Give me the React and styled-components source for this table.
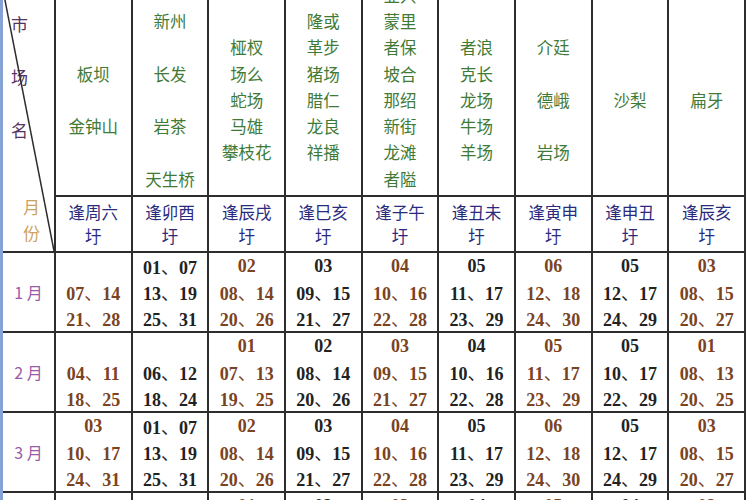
import React from "react";
import styled, { createGlobalStyle } from "styled-components";

const GlobalStyle = createGlobalStyle`
	html, body {
		margin: 0;
		padding: 0;
		background: #ffffff;
	}
`;

const Frame = styled.div`
	width: 750px;
	height: 500px;
	overflow: hidden;
	background: #ffffff;
	border-left: 3px solid #86a3d6;
	box-sizing: border-box;
`;

const Table = styled.table`
	width: 743px;
	margin-top: -10px;
	border-collapse: collapse;
	table-layout: fixed;
	font-family: "Noto Sans CJK SC", "Noto Sans", sans-serif;
`;

const Cell = styled.td`
	padding: 0;
	border: 2px solid #2d2d2d;
	text-align: center;
	vertical-align: middle;
	&:first-child {
		border-left: none;
	}
`;

const CornerCell = styled(Cell)`
	position: relative;
	vertical-align: top;
	border-top: none;
`;

const Diagonal = styled.svg`
	position: absolute;
	inset: 0;
	width: 100%;
	height: 100%;
`;

const CornerText = styled.div`
	height: 259px;
	display: flex;
	flex-direction: column;
	justify-content: space-between;
	padding: 19px 0 2px 0;
	box-sizing: border-box;
`;

const MarketLabel = styled.div`
	color: #553460;
	font-size: 17px;
	line-height: 53px;
	text-align: left;
	padding-left: 8px;
	margin-top: -12px;
`;

const MonthLabel = styled.div`
	color: #c9a45e;
	font-size: 17px;
	line-height: 26px;
	text-align: left;
	padding-left: 20px;
	margin-bottom: 1px;
`;

const HeadCell = styled(Cell)`
	border-top: none;
	vertical-align: top;
`;

const HeadStack = styled.div`
	height: 205px;
	padding-top: 16px;
	box-sizing: border-box;
`;

const HeadLines = styled.div`
	height: 188px;
	display: flex;
	flex-direction: column;
	justify-content: center;
	color: #3f7b37;
	font-size: 16.5px;
	line-height: 26.3px;
	white-space: nowrap;
`;

const Line = styled.div`
	flex: 0 0 26.3px;
`;

const DayCell = styled(Cell)`
	height: 54px;
	color: #2a2a7e;
	font-size: 16.5px;
	line-height: 24px;
`;

const MonthCell = styled(Cell)`
	height: 78px;
	color: #9a5aa6;
	font-size: 16px;
`;

const NumCell = styled(Cell)`
	height: 78px;
	color: ${(p) => (p.$brown ? "#7a4322" : "#222222")};
	font-family: "Liberation Serif", "Noto Sans CJK SC", serif;
	font-weight: bold;
	font-size: 18px;
	line-height: 26px;
	white-space: nowrap;
`;

const NumLine = styled.div`
	height: 26px;
	span {
		font-family: "Noto Sans CJK SC", sans-serif;
		font-weight: normal;
	}
`;

const markets = [
	["板坝", "", "金钟山"],
	["新州", "", "长发", "", "岩茶", "", "天生桥"],
	["桠杈", "场么", "蛇场", "马雄", "攀枝花"],
	["隆或", "革步", "猪场", "腊仁", "龙良", "祥播", ""],
	["业兴", "蒙里", "者保", "坡合", "那绍", "新街", "龙滩", "者隘", ""],
	["者浪", "克长", "龙场", "牛场", "羊场"],
	["介廷", "", "德峨", "", "岩场"],
	["沙梨"],
	["扁牙"],
];

const days = ["逢周六", "逢卯酉", "逢辰戌", "逢巳亥", "逢子午", "逢丑未", "逢寅申", "逢申丑", "逢辰亥"];

const months = [
	{
		name: "1 月",
		cells: [
			["", "07、14", "21、28"],
			["01、07", "13、19", "25、31"],
			["02", "08、14", "20、26"],
			["03", "09、15", "21、27"],
			["04", "10、16", "22、28"],
			["05", "11、17", "23、29"],
			["06", "12、18", "24、30"],
			["05", "12、17", "24、29"],
			["03", "08、15", "20、27"],
		],
	},
	{
		name: "2 月",
		cells: [
			["", "04、11", "18、25"],
			["", "06、12", "18、24"],
			["01", "07、13", "19、25"],
			["02", "08、14", "20、26"],
			["03", "09、15", "21、27"],
			["04", "10、16", "22、28"],
			["05", "11、17", "23、29"],
			["05", "10、17", "22、29"],
			["01", "08、13", "20、25"],
		],
	},
	{
		name: "3 月",
		cells: [
			["03", "10、17", "24、31"],
			["01、07", "13、19", "25、31"],
			["02", "08、14", "20、26"],
			["03", "09、15", "21、27"],
			["04", "10、16", "22、28"],
			["05", "11、17", "23、29"],
			["06", "12、18", "24、30"],
			["05", "12、17", "24、29"],
			["03", "08、15", "20、27"],
		],
	},
	{
		name: "4 月",
		cells: [
			["", "07、14", "21、28"],
			["06、12", "18、24", "30"],
			["01", "07、13", "19、25"],
			["02", "08、14", "20、26"],
			["03", "09、15", "21、27"],
			["04", "10、16", "22、28"],
			["05", "11、17", "23、29"],
			["04", "11、16", "23、28"],
			["02", "07、14", "19、26"],
		],
	},
];

const Num = ({ text }) => {
	const parts = text.split("、");
	if (parts.length < 2) return <NumLine>{text || "\u00a0"}</NumLine>;
	return (
		<NumLine>
			{parts[0]}
			<span>、</span>
			{parts[1]}
		</NumLine>
	);
};

export default function App() {
	return (
		<>
			<GlobalStyle />
			<Frame>
				<Table>
					<colgroup>
						<col style={{ width: 52 }} />
						{days.map((d) => (
							<col key={d} />
						))}
					</colgroup>
					<tbody>
						<tr>
							<CornerCell rowSpan={2}>
								<Diagonal viewBox="0 0 100 100" preserveAspectRatio="none">
									<line x1="0" y1="0" x2="100" y2="100" stroke="#2d2d2d" strokeWidth="1.5" vectorEffect="non-scaling-stroke" />
								</Diagonal>
								<CornerText>
									<MarketLabel>
										市<br />场<br />名
									</MarketLabel>
									<MonthLabel>
										月<br />份
									</MonthLabel>
								</CornerText>
							</CornerCell>
							{markets.map((lines, i) => (
								<HeadCell key={i}>
									<HeadStack>
										<HeadLines>
											{lines.map((l, j) => (
												<Line key={j}>{l}</Line>
											))}
										</HeadLines>
									</HeadStack>
								</HeadCell>
							))}
						</tr>
						<tr>
							{days.map((d) => (
								<DayCell key={d}>
									{d}
									<br />圩
								</DayCell>
							))}
						</tr>
						{months.map((m) => (
							<tr key={m.name}>
								<MonthCell>{m.name}</MonthCell>
								{m.cells.map((c, i) => (
									<NumCell key={i} $brown={i % 2 === 0}>
										{c.map((t, j) => (
											<Num key={j} text={t} />
										))}
									</NumCell>
								))}
							</tr>
						))}
					</tbody>
				</Table>
			</Frame>
		</>
	);
}
